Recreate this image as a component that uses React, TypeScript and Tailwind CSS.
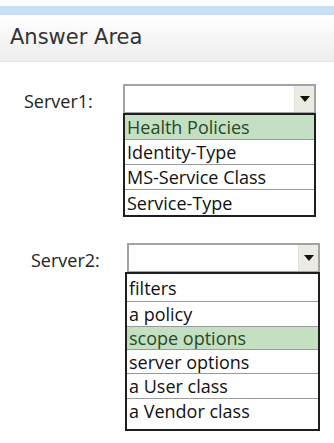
import { ReactNode } from 'react';

const listFont = { fontFamily: '"Open Sans", "Liberation Sans", sans-serif' };

function Select() {
  return (
    <div className="flex h-[30px] w-full border-2 border-[#a3a3a3] bg-white">
      <div className="flex-1" />
      <div className="flex w-[20px] items-center justify-center border-l border-[#e2e2dc] bg-[#ebebe4]">
        <svg width="10" height="6" viewBox="0 0 10 6">
          <path d="M0 0 L10 0 L5 6 Z" fill="#111" />
        </svg>
      </div>
    </div>
  );
}

function Row({ children, active, h }: { children: ReactNode; active?: boolean; h: string }) {
  return (
    <div
      className={
        'flex items-center border-b border-[#9a9a9a] pl-[2px] text-[18px] leading-none last:border-b-0 ' +
        h +
        (active ? ' bg-[#c4dfc2] text-[#274a27]' : ' text-[#111]')
      }
    >
      {children}
    </div>
  );
}

export default function App() {
  return (
    <div className="h-[443px] w-[334px] overflow-hidden bg-white" style={{ fontFamily: '"Open Sans", sans-serif' }}>
      <div className="h-[6px] bg-white" />
      <div className="h-[9px] bg-[#c7dff5]" />
      <div
        className="flex h-[47px] items-center border-b border-[#e4e4e4] bg-gradient-to-b from-white to-[#ededed] pl-[10px] text-[21px] text-[#333]"
        style={{ fontFamily: '"DejaVu Sans", Verdana, sans-serif' }}
      >
        Answer Area
      </div>

      <div className="mt-[22px] flex">
        <div className="w-[123px] pl-[24px] pt-[4px] text-[18px] text-[#222]">Server1:</div>
        <div className="w-[193px]" style={listFont}>
          <Select />
          <div className="-mt-[1px] border-2 border-[#1e1e1e]">
            <Row h="h-[25px]" active>Health Policies</Row>
            <Row h="h-[25px]">Identity-Type</Row>
            <Row h="h-[25px]">MS-Service Class</Row>
            <Row h="h-[25px]">Service-Type</Row>
          </div>
        </div>
      </div>

      <div className="mt-[26px] flex">
        <div className="w-[125px] pl-[31px] pt-[4px] text-[18px] text-[#222]">Server2:</div>
        <div className="w-[195px]" style={listFont}>
          <div className="pl-[2px]">
            <Select />
          </div>
          <div className="-mt-[1px] border-2 border-[#1e1e1e] pb-[6px]">
            <Row h="h-[28px]">filters</Row>
            <Row h="h-[25px]">a policy</Row>
            <Row h="h-[23px]" active>scope options</Row>
            <Row h="h-[24px]">server options</Row>
            <Row h="h-[25px]">a User class</Row>
            <Row h="h-[24px]">a Vendor class</Row>
          </div>
        </div>
      </div>
    </div>
  );
}
